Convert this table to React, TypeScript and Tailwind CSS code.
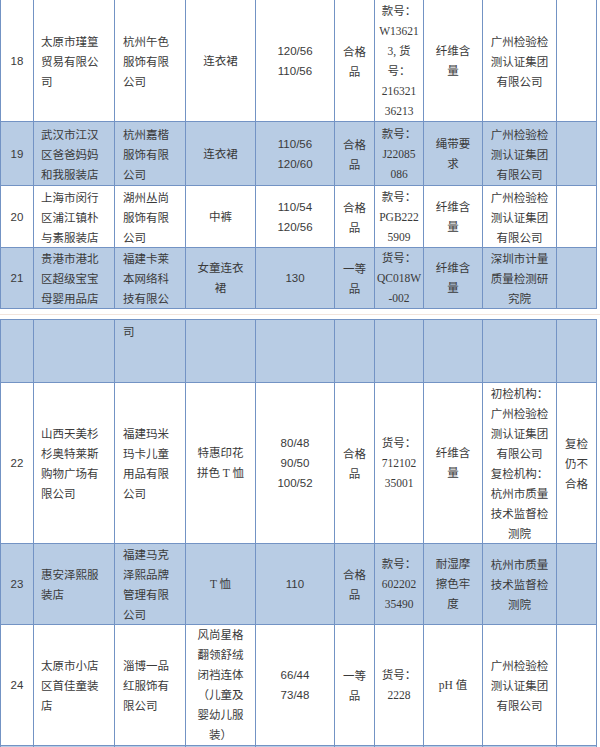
type Row = { cells: string[][]; shade: boolean; h: string; top?: boolean; pad?: string };

const sans = "font-[family-name:'Liberation_Sans','Noto_Sans_CJK_SC',sans-serif]";
const serif = "font-[family-name:'Liberation_Serif','Noto_Sans_CJK_SC',serif]";

const cols = [
  { w: "w-[33px]", cls: `text-center ${sans}` },
  { w: "w-[81px]", cls: "text-left pl-[7px]" },
  { w: "w-[71px]", cls: "text-left pl-[8px]" },
  { w: "w-[70px]", cls: `text-center ${serif}` },
  { w: "w-[79px]", cls: `text-center ${sans}` },
  { w: "w-[40px]", cls: "text-center" },
  { w: "w-[49px]", cls: `text-center ${serif}` },
  { w: "w-[59px]", cls: `text-center ${serif}` },
  { w: "w-[74px]", cls: "text-center" },
  { w: "w-[40px]", cls: "text-center" },
];

const lab = ["广州检验检", "测认证集团", "有限公司"];

const first: Row[] = [
  {
    shade: false,
    h: "h-[122px]",
    pad: "pt-[2px]",
    cells: [
      ["18"],
      ["太原市瑾篁", "贸易有限公", "司"],
      ["杭州午色", "服饰有限", "公司"],
      ["连衣裙"],
      ["120/56", "110/56"],
      ["合格", "品"],
      ["款号：", "W13621", "3, 货", "号：", "216321", "36213"],
      ["纤维含", "量"],
      lab,
      [],
    ],
  },
  {
    shade: true,
    h: "h-[64px]",
    cells: [
      ["19"],
      ["武汉市江汉", "区爸爸妈妈", "和我服装店"],
      ["杭州嘉楷", "服饰有限", "公司"],
      ["连衣裙"],
      ["110/56", "120/60"],
      ["合格", "品"],
      ["款号：", "J22085", "086"],
      ["绳带要", "求"],
      lab,
      [],
    ],
  },
  {
    shade: false,
    h: "h-[62px]",
    cells: [
      ["20"],
      ["上海市闵行", "区浦江镇朴", "与素服装店"],
      ["湖州丛尚", "服饰有限", "公司"],
      ["中裤"],
      ["110/54", "120/56"],
      ["合格", "品"],
      ["款号：", "PGB222", "5909"],
      ["纤维含", "量"],
      lab,
      [],
    ],
  },
  {
    shade: true,
    h: "h-[61px]",
    cells: [
      ["21"],
      ["贵港市港北", "区超级宝宝", "母婴用品店"],
      ["福建卡莱", "本网络科", "技有限公"],
      ["女童连衣", "裙"],
      ["130"],
      ["一等", "品"],
      ["货号：", "QC018W", "-002"],
      ["纤维含", "量"],
      ["深圳市计量", "质量检测研", "究院"],
      [],
    ],
  },
];

const second: Row[] = [
  {
    shade: true,
    top: true,
    h: "h-[63px]",
    cells: [[], [], ["司"], [], [], [], [], [], [], []],
  },
  {
    shade: false,
    h: "h-[160px]",
    cells: [
      ["22"],
      ["山西天美杉", "杉奥特莱斯", "购物广场有", "限公司"],
      ["福建玛米", "玛卡儿童", "用品有限", "公司"],
      ["特惠印花", "拼色 T 恤"],
      ["80/48", "90/50", "100/52"],
      ["合格", "品"],
      ["货号：", "712102", "35001"],
      ["纤维含", "量"],
      ["初检机构：", ...lab, "复检机构：", "杭州市质量", "技术监督检", "测院"],
      ["复检", "仍不", "合格"],
    ],
  },
  {
    shade: true,
    h: "h-[81px]",
    cells: [
      ["23"],
      ["惠安泽熙服", "装店"],
      ["福建马克", "泽熙品牌", "管理有限", "公司"],
      ["T 恤"],
      ["110"],
      ["合格", "品"],
      ["款号：", "602202", "35490"],
      ["耐湿摩", "擦色牢", "度"],
      ["杭州市质量", "技术监督检", "测院"],
      [],
    ],
  },
  {
    shade: false,
    h: "h-[120px]",
    cells: [
      ["24"],
      ["太原市小店", "区首佳童装", "店"],
      ["淄博一品", "红服饰有", "限公司"],
      ["风尚星格", "翻领舒绒", "闭裆连体", "（儿童及", "婴幼儿服", "装）"],
      ["66/44", "73/48"],
      ["一等", "品"],
      ["货号：", "2228"],
      ["pH 值"],
      lab,
      [],
    ],
  },
  {
    shade: true,
    h: "h-[40px]",
    cells: [[], [], [], [], [], [], [], [], [], []],
  },
];

function Table({ rows, className }: { rows: Row[]; className?: string }) {
  return (
    <table className={`w-[596px] table-fixed border-collapse ${className ?? ""}`}>
      <colgroup>
        {cols.map((c, i) => (
          <col key={i} className={c.w} />
        ))}
      </colgroup>
      <tbody>
        {rows.map((r, i) => (
          <tr key={i} className={`${r.h} ${r.shade ? "bg-[#b8cce4]" : "bg-white"}`}>
            {r.cells.map((lines, j) => (
              <td
                key={j}
                className={`border border-[#7393c4] p-0 ${r.top ? "align-top pt-[1px]" : "align-middle"} ${r.pad ?? ""} ${cols[j].cls}`}
              >
                {lines.map((l, k) => (
                  <div key={k}>{l}</div>
                ))}
              </td>
            ))}
          </tr>
        ))}
      </tbody>
    </table>
  );
}

export default function App() {
  return (
    <div className="h-[747px] w-[600px] overflow-hidden bg-white font-[family-name:'Noto_Sans_CJK_SC',sans-serif] text-[11.5px] leading-[20px] text-[#3a3a3a]">
      <Table rows={first} className="-mt-[2px]" />
      <div className="flex h-[10px] flex-col justify-center">
        <div className="h-px w-full bg-[#f2e4dc]" />
      </div>
      <Table rows={second} />
    </div>
  );
}
